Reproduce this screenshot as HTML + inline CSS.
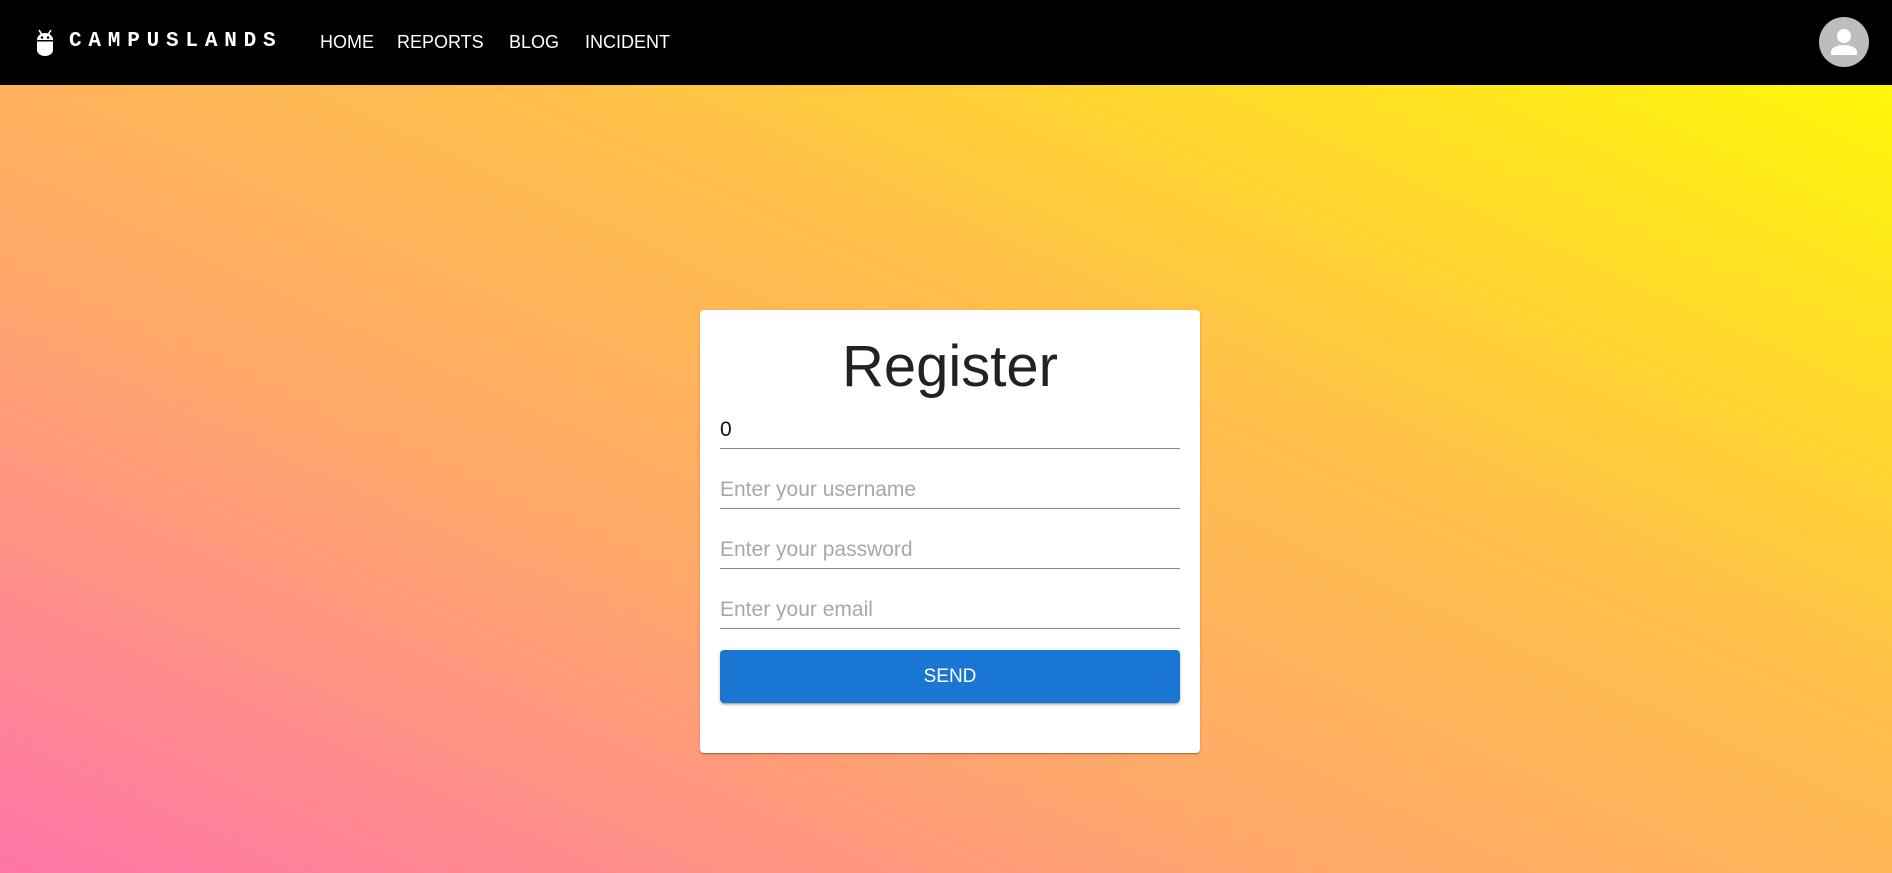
<!DOCTYPE html>
<html><head><meta charset="utf-8"><style>
*{margin:0;padding:0;box-sizing:border-box}
body{width:1892px;height:873px;overflow:hidden;font-family:"Liberation Sans",Arial,sans-serif;
background:linear-gradient(to top right,#ff75a8 0%,#ffa86a 35%,#ffc04a 60%,#ffff00 100%);position:relative}
.nav{position:absolute;left:0;top:0;width:1892px;height:85px;background:#000}
.logo{position:absolute;left:36px;top:29px}
.brand{position:absolute;left:69px;top:29px;color:#fff;font-family:"Liberation Mono",monospace;font-weight:bold;font-size:21px;letter-spacing:6.8px;line-height:26px}
.nl{position:absolute;top:31px;color:#fff;font-size:18px;line-height:22px}
.av{position:absolute;left:1819px;top:17px;width:50px;height:50px;border-radius:50%;background:#bdbdbd}
.card{position:absolute;left:700px;top:310px;width:500px;height:443px;background:#fff;border-radius:4px;box-shadow:0 2px 1px -1px rgba(0,0,0,.2),0 1px 1px rgba(0,0,0,.14),0 1px 3px rgba(0,0,0,.12)}
.title{position:absolute;left:0;width:500px;top:22px;text-align:center;font-size:58px;line-height:70px;color:#222}
.f{position:absolute;left:20px;width:460px;height:60px;border-bottom:1px solid #8a8a8a}
.f span{position:absolute;left:0;bottom:5px;font-size:21px;line-height:26px;color:#a8a8a8}
.btn{position:absolute;left:20px;top:340px;width:460px;height:53px;background:#1976d2;border-radius:4px;color:#fff;font-size:19px;text-align:center;line-height:53px;box-shadow:0 3px 1px -2px rgba(0,0,0,.2),0 2px 2px rgba(0,0,0,.14),0 1px 5px rgba(0,0,0,.12)}
</style></head><body>
<div class="nav">
<svg class="logo" width="18" height="28" viewBox="0 0 18 28"><path d="M3 1 L5.5 5 M15 1 L12.5 5" stroke="#fff" stroke-width="1.6"/><path d="M1 11 A8 7 0 0 1 17 11 Z" fill="#fff"/><circle cx="6" cy="8.5" r="1.3" fill="#000"/><circle cx="12" cy="8.5" r="1.3" fill="#000"/><path d="M1 12.5 H17 V21 A8 6 0 0 1 1 21 Z" fill="#fff"/></svg>
<div class="brand">CAMPUSLANDS</div>
<div class="nl" style="left:320px">HOME</div>
<div class="nl" style="left:397px">REPORTS</div>
<div class="nl" style="left:509px">BLOG</div>
<div class="nl" style="left:585px">INCIDENT</div>
<div class="av"><svg width="50" height="50" viewBox="0 0 50 50"><circle cx="25" cy="19" r="7" fill="#fff"/><path d="M12 38 V35 C12 30 20 28 25 28 C30 28 38 30 38 35 V38 Z" fill="#fff"/></svg></div>
</div>
<div class="card">
<div class="title">Register</div>
<div class="f" style="top:79px"><span style="color:#111">0</span></div>
<div class="f" style="top:139px"><span>Enter your username</span></div>
<div class="f" style="top:199px"><span>Enter your password</span></div>
<div class="f" style="top:259px"><span>Enter your email</span></div>
<div class="btn">SEND</div>
</div>
</body></html>
